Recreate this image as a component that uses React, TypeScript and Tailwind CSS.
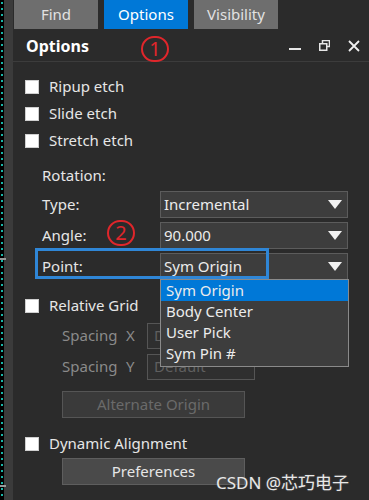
import React from "react";

const font = { fontFamily: '"Noto Sans", "Open Sans", sans-serif' };

function Check({ label }: { label: string }) {
    return (
        <div className="flex items-center h-[27px] pl-[12px]">
            <div className="w-[14px] h-[14px] bg-white border border-[#cfcfcf]" />
            <span className="ml-[10px] text-[15px] text-[#e6e6e6]">{label}</span>
        </div>
    );
}

function Arrow() {
    return (
        <svg width="14" height="9" viewBox="0 0 14 9" className="shrink-0">
            <path d="M0 0 H14 L7 9 Z" fill="#f2f2f2" />
        </svg>
    );
}

function Select({ value }: { value: string }) {
    return (
        <div className="w-[188px] h-[27px] bg-[#3d3d3d] border border-[#5c5c5c] flex items-center justify-between pl-[3px] pr-[5px]">
            <span className="text-[15px] text-[#ececec]">{value}</span>
            <Arrow />
        </div>
    );
}

function Field({ label, value }: { label: string; value: string }) {
    return (
        <div className="flex items-center h-[27px] pl-[29px]">
            <span className="w-[118px] text-[15px] text-[#e6e6e6]">{label}</span>
            <Select value={value} />
        </div>
    );
}

function Spacing({ axis }: { axis: string }) {
    return (
        <div className="flex items-center h-[27px]">
            <span className="w-[64px] text-[15px] text-[#8a8a8a]">Spacing</span>
            <span className="w-[21px] text-[15px] text-[#8a8a8a]">{axis}</span>
            <div className="w-[108px] h-[26px] border border-[#555555] bg-[#2f2f2f] pl-[6px] flex items-center text-[15px] text-[#5f5f5f]">
                Default
            </div>
        </div>
    );
}

function Circled({ n }: { n: string }) {
    return (
        <div className="w-[28px] h-[26px] rounded-full border-[2px] border-[#e0262b] flex items-center justify-center text-[#e0262b] text-[20px] leading-none">
            {n}
        </div>
    );
}

function Dots() {
    return (
        <svg width="4" height="500" className="block">
            <defs>
                <pattern id="dots" width="4" height="6" patternUnits="userSpaceOnUse">
                    <rect x="1" y="2" width="2" height="2" fill="#18b6a8" />
                </pattern>
            </defs>
            <rect width="4" height="500" fill="#000" />
            <rect width="4" height="500" fill="url(#dots)" />
        </svg>
    );
}

export default function App() {
    return (
        <div className="relative w-[369px] h-[500px] flex bg-[#2b2b2b] overflow-hidden" style={font}>
            <Dots />
            <div className="w-[9px] h-full bg-[#3b3b3b] relative">
                <div className="absolute left-[-4px] top-[258px] w-[6px] h-[2px] bg-[#9a9a9a]" />
                <div className="absolute left-[-4px] top-[485px] w-[6px] h-[2px] bg-[#9a9a9a]" />
            </div>

            <div className="flex-1 flex flex-col">
                {/* tabs */}
                <div className="h-[30px] flex gap-[6px] pl-[1px] bg-[#2b2b2b]">
                    <div className="w-[84px] h-[29px] bg-[#6e6e6e] flex items-center justify-center text-[15px] text-[#e2e2e2]">Find</div>
                    <div className="w-[84px] h-[29px] bg-[#0078d7] flex items-center justify-center text-[15px] text-white">Options</div>
                    <div className="w-[84px] h-[29px] bg-[#6e6e6e] flex items-center justify-center text-[15px] text-[#e2e2e2]">Visibility</div>
                </div>

                {/* header */}
                <div className="h-[32px] flex items-center pl-[13px] pr-[9px] border-b border-[#3c3c3c]">
                    <span className="text-[16px] font-bold text-white">Options</span>
                    <div className="ml-auto flex items-center gap-[18px]">
                        <div className="w-[12px] h-[2px] bg-[#e6e6e6] mt-[6px]" />
                        <svg width="11" height="11" viewBox="0 0 11 11">
                            <rect x="3.5" y="0.5" width="7" height="6" fill="none" stroke="#e6e6e6" strokeWidth="1.5" />
                            <rect x="0.75" y="3.75" width="7" height="6.5" fill="#2b2b2b" stroke="#e6e6e6" strokeWidth="1.5" />
                        </svg>
                        <svg width="12" height="12" viewBox="0 0 12 12">
                            <path d="M1 1 L11 11 M11 1 L1 11" stroke="#f0f0f0" strokeWidth="1.8" />
                        </svg>
                    </div>
                </div>

                {/* body */}
                <div className="flex flex-col pt-[11px]">
                    <Check label="Ripup etch" />
                    <Check label="Slide etch" />
                    <Check label="Stretch etch" />
                    <div className="h-[36px] flex items-end pb-[4px] pl-[29px] text-[15px] text-[#e6e6e6]">Rotation:</div>
                    <div className="flex flex-col gap-[4px] mt-[1px]">
                        <Field label="Type:" value="Incremental" />
                        <Field label="Angle:" value="90.000" />
                        <Field label="Point:" value="Sym Origin" />
                    </div>
                    <div className="mt-[12px]">
                        <Check label="Relative Grid" />
                    </div>
                    <div className="flex flex-col gap-[4px] mt-[3px] pl-[49px]">
                        <Spacing axis="X" />
                        <Spacing axis="Y" />
                    </div>
                    <div className="mt-[11px] ml-[49px] w-[183px] h-[27px] bg-[#3a3a3a] border border-[#555555] flex items-center justify-center text-[15px] text-[#6a6a6a]">
                        Alternate Origin
                    </div>
                    <div className="mt-[12px]">
                        <Check label="Dynamic Alignment" />
                    </div>
                    <div className="mt-[1px] ml-[49px] w-[183px] h-[27px] bg-[#4a4a4a] border border-[#5e5e5e] flex items-center justify-center text-[15px] text-[#e6e6e6]">
                        Preferences
                    </div>
                </div>
            </div>

            {/* open dropdown list */}
            <div className="absolute left-[160px] top-[279px] w-[189px] bg-[#3d3d3d] border border-[#8a8a8a] flex flex-col text-[15px] text-[#ececec]">
                <div className="h-[21px] bg-[#0078d7] pl-[5px] flex items-center">Sym Origin</div>
                <div className="h-[21px] pl-[5px] flex items-center">Body Center</div>
                <div className="h-[21px] pl-[5px] flex items-center">User Pick</div>
                <div className="h-[21px] pl-[5px] flex items-center mb-[2px]">Sym Pin #</div>
            </div>

            {/* annotation: blue highlight */}
            <div className="absolute left-[35px] top-[248px] w-[234px] h-[31px] border-[3px] border-[#2f86d6]" />

            {/* annotation: red numbers */}
            <div className="absolute left-[141px] top-[36px]"><Circled n="1" /></div>
            <div className="absolute left-[107px] top-[220px]"><Circled n="2" /></div>

            {/* watermark */}
            <div className="absolute left-[216px] top-[470px] text-[17px] text-[#e8e8e8]" style={{ fontFamily: '"Noto Sans", "Noto Sans CJK SC", sans-serif', textShadow: "0 0 2px #555" }}>
                CSDN @芯巧电子
            </div>
        </div>
    );
}
